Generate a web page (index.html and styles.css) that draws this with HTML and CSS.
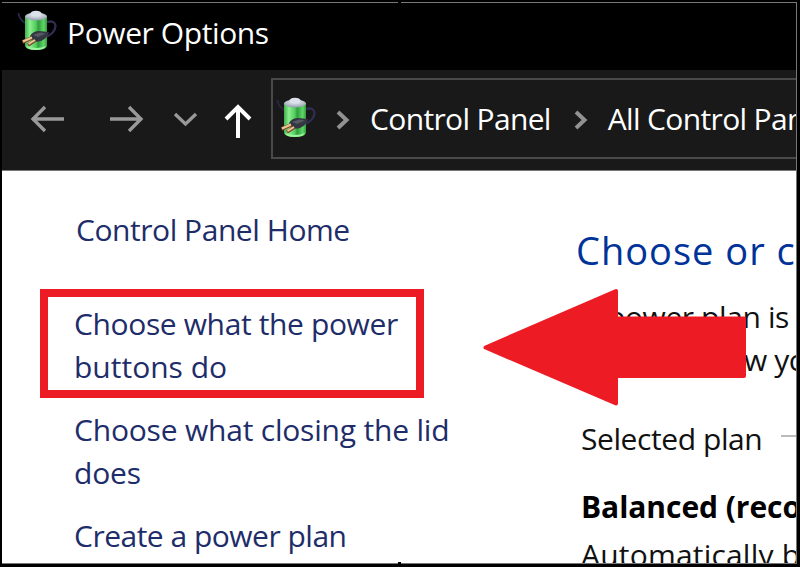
FILE: index.html
```
<!DOCTYPE html>
<html lang="en">
<head>
<meta charset="utf-8">
<title>Power Options</title>
<link rel="stylesheet" href="styles.css">
</head>
<body>
<svg class="defs" width="0" height="0" aria-hidden="true">
  <defs>
    <linearGradient id="cell" x1="0" x2="1" y1="0" y2="0">
      <stop offset="0" stop-color="#3fae4c"/>
      <stop offset=".22" stop-color="#8af08e"/>
      <stop offset=".5" stop-color="#52cb5c"/>
      <stop offset=".6" stop-color="#2f9c3e"/>
      <stop offset=".85" stop-color="#5fd767"/>
      <stop offset="1" stop-color="#349b3f"/>
    </linearGradient>
    <radialGradient id="cap" cx=".5" cy=".3" r=".7">
      <stop offset="0" stop-color="#f4f6fc"/>
      <stop offset="1" stop-color="#8f9cab"/>
    </radialGradient>
    <symbol id="battery" viewBox="0 0 42 42">
      <path d="M1.500 3Q2 9 8 13" fill="none" stroke="#29263f" stroke-width="2"/>
      <path d="M30 12Q38 10 38.500 16Q38 23 29 27" fill="none" stroke="#302d50" stroke-width="2.400"/>
      <path d="M8 6V36Q9 40 19 40Q29 40 30 36V6Z" fill="url(#cell)"/>
      <path d="M9 36Q19 40 29 36Q27 40 19 40Q11 40 9 36Z" fill="#9af59c"/>
      <ellipse cx="19" cy="6.500" rx="11" ry="4" fill="url(#cap)"/>
      <ellipse cx="19" cy="3.500" rx="5.500" ry="2.800" fill="#dce1ec"/>
      <path d="M13 26Q16 21 22 21L32 22Q31 28 24 31Q18 33 15 30Z" fill="#343641"/>
      <path d="M16 25L23 22.500L29 23.500L21 27Z" fill="#565964"/>
      <path d="M15 28L5.500 32M18 30.500L11 35" stroke="#7b4d2d" stroke-width="3.600"/>
      <path d="M15 27.500L6 31.500M18 30L11.500 34" stroke="#edc797" stroke-width="2"/>
    </symbol>
  </defs>
</svg>
<div class="window">
  <header class="titlebar">
    <svg class="app-icon"><use href="#battery"/></svg>
    <span class="title">Power Options</span>
  </header>
  <nav class="toolbar">
    <svg class="nav-icons" viewBox="0 0 240 50" fill="none" stroke="#999" stroke-width="3.300">
      <path d="M62 25H30M43 13L31 25L43 37"/>
      <path d="M108 25H140M127 13L139 25L127 37"/>
      <path d="M173 20L183.500 30L194 20"/>
      <path d="M236 44V13M224 25L236 13L248 25" stroke="#fff" stroke-width="4"/>
    </svg>
    <div class="address">
      <svg class="address-icon"><use href="#battery"/></svg>
      <svg class="chevron" viewBox="0 0 14 20"><path d="M2 2L10.500 10L2 18"/></svg>
      <span class="crumb">Control Panel</span>
      <svg class="chevron second" viewBox="0 0 14 20"><path d="M2 2L10.500 10L2 18"/></svg>
      <span class="crumb">All Control Pan</span>
    </div>
  </nav>
  <div class="content">
    <aside class="sidebar">
      <a class="link home">Control Panel Home</a>
      <a class="link highlighted">Choose what the power<br><span class="buttons">buttons do</span></a>
      <a class="link lid">Choose what closing the lid<br>does</a>
      <a class="link create">Create a power plan</a>
    </aside>
    <main class="main">
      <h1 class="heading">Choose or c</h1>
      <p class="intro">A power plan is<br><span class="second-line">w yo</span></p>
      <div class="group"><span>Selected plan</span><i class="rule"></i></div>
      <p class="plan">Balanced (reco</p>
      <p class="description">Automatically b</p>
    </main>
  </div>
  <svg class="arrow" viewBox="0 0 265 119"><path d="M3.500 59.500L134 3V30.500H262V88H134V115.500Z"/></svg>
</div>
<i class="tick top"></i>
<i class="tick bottom"></i>
</body>
</html>
```
FILE: styles.css
```
* { box-sizing: border-box; }

body {
  position: relative;
  width: 800px;
  height: 567px;
  margin: 0;
  padding: 2px 3px 3px 2px;
  overflow: hidden;
  background: #000;
  font: 30px/43px "Open Sans", "Noto Sans", sans-serif;
}

.defs { position: absolute; }

.window {
  position: relative;
  width: 795px;
  height: 562px;
  overflow: hidden;
  border: solid #777;
  border-width: 1px 1px 1px 0;
  background: #fff;
}

.titlebar {
  display: flex;
  height: 67px;
  padding: 7px 0 0 15px;
  background: #000;
  color: #fff;
}

.app-icon, .address-icon {
  flex: none;
  width: 42px;
  height: 42px;
}

.title {
  margin: 1px 0 0 8px;
  letter-spacing: -.4px;
}

.toolbar {
  display: flex;
  height: 101px;
  padding-top: 8px;
  border-bottom: 1px solid #777;
  background: #191919;
  color: #fff;
}

.nav-icons {
  flex: none;
  width: 240px;
  height: 50px;
  margin: 16px 29px 0 0;
  overflow: visible;
}

.address {
  display: flex;
  flex: none;
  width: 540px;
  height: 81px;
  padding: 17px 0 0 3px;
  border: 2px solid #494949;
  white-space: nowrap;
}

.chevron {
  flex: none;
  width: 14px;
  height: 20px;
  margin: 13px 20px 0 18px;
  fill: none;
  stroke: #929292;
  stroke-width: 4;
}

.chevron.second { margin-left: 23px; }

.crumb { letter-spacing: -.65px; }

.content {
  display: flex;
  height: 392px;
}

.sidebar {
  flex: none;
  width: 574px;
  padding: 37px 0 0 38px;
  color: #1e2d69;
}

.link {
  display: block;
  width: 420px;
  padding-left: 34px;
}

.home { padding-left: 36px; letter-spacing: -.45px; }

.highlighted {
  width: 384px;
  height: 109px;
  margin: 38px 0 10px;
  padding: 5px 0 0 26px;
  border: 8px solid #ed1c24;
  letter-spacing: -.37px;
}

.buttons { letter-spacing: 0; }

.lid { letter-spacing: -.2px; }

.create { margin-top: 20px; letter-spacing: -.5px; }

.main {
  flex: none;
  width: 400px;
  color: #111;
  white-space: nowrap;
}

.heading {
  margin: 58px 0 0;
  color: #003399;
  font-size: 38px;
  font-weight: 400;
  letter-spacing: 1px;
}

.intro, .plan, .description { margin: 0 0 0 5px; }

.intro { margin-top: 23px; letter-spacing: -.4px; }

.second-line { margin-left: 163px; }

.group {
  display: flex;
  align-items: center;
  gap: 19px;
  margin: 36px 0 0 5px;
  letter-spacing: -.42px;
}

.rule {
  width: 200px;
  height: 2px;
  margin-top: -5px;
  background: #bbb;
}

.plan {
  margin-top: 25px;
  color: #000;
  font-weight: 700;
  letter-spacing: -.05px;
}

.description { margin-top: 5px; letter-spacing: .2px; }

.arrow {
  position: absolute;
  top: 285px;
  left: 480px;
  width: 265px;
  height: 119px;
  fill: #ed1c24;
  stroke: #ed1c24;
  stroke-width: 4;
  stroke-linejoin: round;
}

.tick {
  position: absolute;
  left: 398px;
  width: 3px;
  height: 3px;
  background: #000;
}

.tick.top { top: 1px; }
.tick.bottom { top: 562px; }
```
